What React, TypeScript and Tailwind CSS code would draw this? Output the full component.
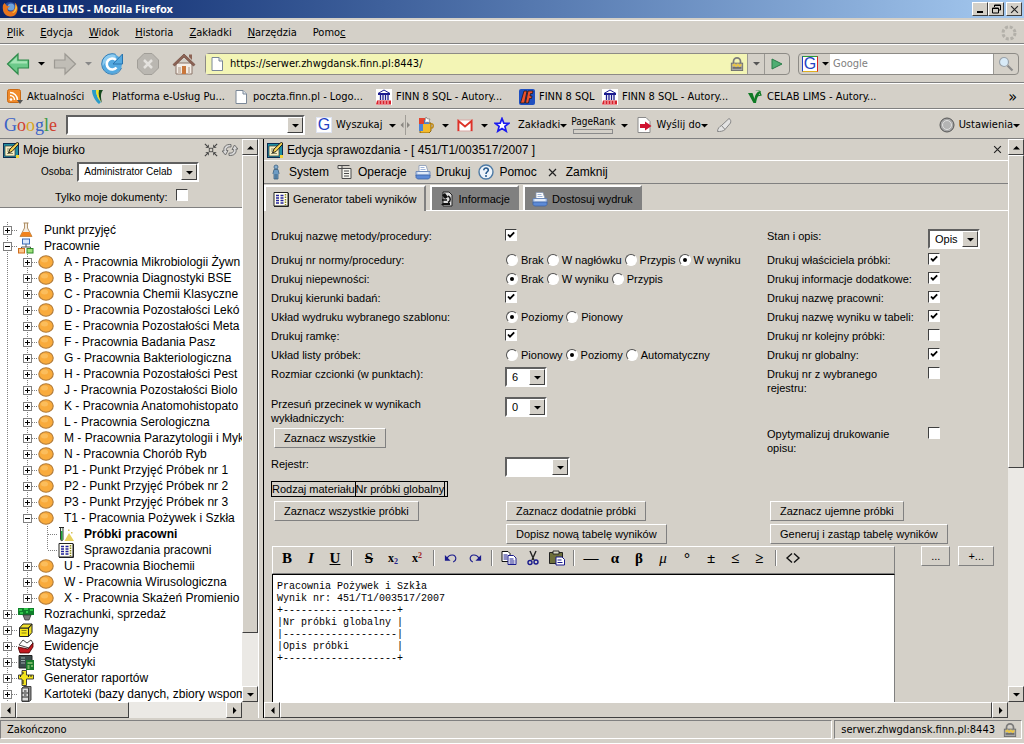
import { useState, type ReactNode } from "react";

const BEVEL = "border border-t-white border-l-white border-r-[#404040] border-b-[#404040]";
const SOFT_BEVEL = "border border-t-white border-l-white border-r-[#808080] border-b-[#808080]";
const SUNKEN = "border-2 border-t-[#606060] border-l-[#606060] border-r-white border-b-white";

/* ---------- small drawings ---------- */

type Dir = "up" | "down" | "left" | "right";

const ARROWS: Record<Dir, string> = {
  up: "M0 5.5h7L3.5 2z",
  down: "M0 2h7L3.5 5.5z",
  left: "M5.5 0v7L2 3.5z",
  right: "M2 0v7l3.5-3.5z",
};

function Arrow({ dir = "down", color = "#000" }: { dir?: Dir; color?: string }) {
  return (
    <svg width="7" height="7" viewBox="0 0 7 7" className="shrink-0" aria-hidden="true">
      <path d={ARROWS[dir]} fill={color} />
    </svg>
  );
}

function Icon({ size = 16, children }: { size?: number; children: ReactNode }) {
  return (
    <svg width={size} height={size} viewBox="0 0 16 16" className="shrink-0" aria-hidden="true">
      {children}
    </svg>
  );
}

const FirefoxIcon = () => (
  <Icon>
    <circle cx="8" cy="8" r="7" fill="#2b4c9b" />
    <circle cx="9" cy="6" r="3.500" fill="#6fa3dd" />
    <path d="M1 4C0 9 2 15 8 15.500s8-5 7.500-9C15 4 14 2 12.500 1.500c1 2 1 3 .7 4.500-.5 3-3 5-5.500 4.500-2-.5-2.500-2-2-3.500L8 5.500 5 5 2.500 2z" fill="#e8741c" />
    <path d="M13 3c1 3 0 7-3 9 2.500 0 5-2 5-6z" fill="#f8c13a" />
  </Icon>
);

const PageIcon = () => (
  <Icon>
    <path d="M3 1.500h7l3.500 3.500v9.500H3z" fill="#fff" stroke="#7a8797" />
    <path d="M10 1.500V5h3.500" fill="#dfe6ee" stroke="#7a8797" />
  </Icon>
);

const RssIcon = () => (
  <Icon>
    <rect x="0.500" y="0.500" width="13" height="13" rx="2" fill="#f08a2c" stroke="#c96a15" />
    <circle cx="4" cy="10.500" r="1.300" fill="#fff" />
    <path d="M3 6.500a4.500 4.500 0 0 1 4.500 4.500M3 3.500A7.500 7.500 0 0 1 10.500 11" fill="none" stroke="#fff" strokeWidth="1.500" />
    <path d="M10 11h6l-3 4z" fill="#555" />
  </Icon>
);

const PlatformIcon = () => (
  <Icon>
    <path d="M0 1h4c0 5 2 9 5 12l-2 2C3 12 0 6 0 1z" fill="#2a9bc9" />
    <path d="M4 1h3c-1 4 0 8 2 12C6 10 4 6 4 1z" fill="#f1e31e" />
    <path d="M7 1h4c-3 4-2 8-1 13-3-4-4-9-3-13z" fill="#174a1f" />
  </Icon>
);

const TempleIcon = () => (
  <Icon>
    <rect width="16" height="16" fill="#fff" />
    <path d="M2 4.500 8 1l6 3.500zM2 5.500h12" fill="#fff" stroke="#1b1b8f" />
    <path d="M4.500 6v5M7 6v5M9.500 6v5M12 6v5" stroke="#1b1b8f" strokeWidth="1.300" />
    <path d="M1 11.500h14v4H0z" fill="#d8202a" />
    <path d="M3 12v3M6 12v3M9 12v3M12 12v3" stroke="#fff" strokeWidth="0.800" />
  </Icon>
);

const FinnIcon = () => (
  <Icon>
    <rect width="16" height="16" rx="2" fill="#1f4fc0" />
    <path d="M5 2h3L5.500 14h-4z" fill="#f0502a" stroke="#111" strokeWidth="0.700" />
    <path d="M9 2h5l-.5 2.500h-2L11 7h2l-.5 2.500h-2L9.500 14H6.500z" fill="#f0502a" stroke="#111" strokeWidth="0.700" />
  </Icon>
);

const CelabIcon = () => (
  <Icon>
    <path d="M1 4h4.500l2 6C8 6 9.500 3 13 2c-1.500-1-3-1-4.500 0C9.500.5 13 .5 14 3c-2 2-4 5-5 11H6.500z" fill="#0f7a24" />
    <path d="M10 7l4-1-1-2.500" fill="none" stroke="#0f7a24" strokeWidth="1.200" />
  </Icon>
);

const GIcon = ({ framed = false }: { framed?: boolean }) => (
  <span
    className={`flex size-4 shrink-0 items-center justify-center border bg-white font-['Liberation_Sans'] text-base leading-none text-[#2342c4] ${
      framed ? "border-t-[#2d9a3a] border-l-[#2342c4] border-r-[#d22] border-b-[#e0b020]" : "border-[#dfe4f2]"
    }`}
  >
    G
  </span>
);

const LockIcon = () => (
  <Icon size={14}>
    <path d="M4 8V5a4 4 0 0 1 8 0v3" fill="none" stroke="#7b7b7b" strokeWidth="2" />
    <rect x="1.500" y="7" width="13" height="8.500" fill="#a8a8a8" stroke="#6c6c6c" />
    <path d="M3 10l2-1.500 2 2 2-2 2 2 2-2" fill="none" stroke="#eac646" strokeWidth="2" />
    <path d="M3 12.500h10" stroke="#333" />
  </Icon>
);

const NoteIcon = () => (
  <Icon>
    <rect x="0.500" y="1.500" width="15" height="14" fill="#1f8ea1" stroke="#0c2b52" />
    <path d="M2 4h10v10H2z" fill="#f7f0c4" stroke="#333" strokeWidth="0.700" />
    <path d="M4 7h3M4 9h3M4 11.500h6" stroke="#8a8a6a" />
    <path d="M14.500 0 7 7l-1.500 4L9 9.500 15.800 2z" fill="#f6d251" stroke="#111" strokeWidth="0.900" />
    <path d="M13 13h3v3h-3z" fill="#f1d43a" />
  </Icon>
);

const ListIcon = () => (
  <Icon>
    <path d="M1 1.500h14V15H1z" fill="#fffef0" stroke="#222" />
    <path d="M3 4.500h3M7.500 4.500h3M3 7h3M7.500 7h3M3 9.500h3M7.500 9.500h3M3 12h3M7.500 12h3" stroke="#23239b" strokeWidth="1.300" />
    <path d="M12.500 3v11" stroke="#8c8a17" strokeWidth="1.500" strokeDasharray="1.500 1" />
    <path d="M1 15.500h14.500V2" fill="none" stroke="#222" />
  </Icon>
);

const PrinterIcon = () => (
  <Icon>
    <path d="M4 1.500h7l2 6H4z" fill="#fff" stroke="#8798b4" strokeWidth="0.800" />
    <path d="M5.500 3.500h4M5.500 5.500h5" stroke="#9fb4d8" />
    <path d="M1 7.500h14v4.500H1z" fill="#c3d5f0" stroke="#5b7cb5" strokeWidth="0.800" />
    <path d="M1 11h14v2.500l-1.500 1.500h-11L1 13.500z" fill="#5d8ad6" stroke="#3c62a5" strokeWidth="0.800" />
    <path d="M3 9h10" stroke="#fff" />
  </Icon>
);

const PersonIcon = () => (
  <Icon>
    <circle cx="8" cy="3" r="2" fill="#86aed0" stroke="#3a607f" strokeWidth="0.800" />
    <path d="M6 5.500h4l1 4-1 1v4.500H6v-4.500l-1-1z" fill="#6d9cc4" stroke="#3a607f" strokeWidth="0.800" />
    <path d="M8 10v5" stroke="#3a607f" />
  </Icon>
);

const ScriptIcon = () => (
  <Icon>
    <path d="M1 1.500h11.500M1 1.500v3h4M5 2v12.500h9V4.500H5" fill="#f4f4ee" stroke="#4a4a4a" />
    <path d="M7 7h5M7 9.500h5M7 12h5" stroke="#4a4a4a" />
  </Icon>
);

const HelpIcon = () => (
  <Icon>
    <circle cx="8" cy="8" r="7" fill="#eef4fa" stroke="#4d7aa5" strokeWidth="1.400" />
    <path d="M5.800 6.300C5.800 3 10.500 3.400 10.300 6.200 10.200 7.800 8 7.800 8 10" fill="none" stroke="#24588c" strokeWidth="1.600" />
    <circle cx="8" cy="12" r="1" fill="#24588c" />
  </Icon>
);

const CloseIcon = () => (
  <Icon size={9}>
    <path d="M2 2l12 12M14 2L2 14" stroke="#222" strokeWidth="2" />
  </Icon>
);

const CrossIcon = () => (
  <Icon>
    <path d="M4 5l7 7M11 5l-7 7" stroke="#222" strokeWidth="1.200" />
  </Icon>
);

const MicroscopeIcon = () => (
  <Icon>
    <path d="M4 1h6l3 3v11H4z" fill="#ddd" stroke="#222" />
    <path d="M3 4l3-2 3 4-3 2z" fill="#111" />
    <path d="M9 5c3 1.500 3 5 0 6.500M3 9h5" fill="none" stroke="#111" strokeWidth="1.500" />
    <path d="M4 12h7v2H2z" fill="#111" />
  </Icon>
);

const FlaskIcon = () => (
  <Icon>
    <path d="M6.500 1v5L2 14.500h12L9.500 6V1" fill="#f4ece0" stroke="#a8875a" strokeWidth="0.900" />
    <path d="M4.500 10h7l2.500 4.500H2z" fill="#f0821e" />
    <path d="M5.500 1h5" stroke="#a8875a" />
  </Icon>
);

const OrgIcon = () => (
  <Icon>
    <path d="M8 6v3M3.500 11V9h9v2" fill="none" stroke="#555" />
    <rect x="4.500" y="1" width="7" height="5" fill="#dbe8fb" stroke="#3b6bb8" />
    <rect x="0.500" y="10.500" width="6" height="4.500" fill="#fbc58a" stroke="#cf6b1c" />
    <rect x="9" y="10.500" width="6" height="4.500" fill="#9fe07d" stroke="#2d8a28" />
  </Icon>
);

const BallIcon = () => (
  <Icon>
    <ellipse cx="8" cy="8" rx="7.200" ry="6.200" fill="#f9ab3c" stroke="#b07a3a" strokeWidth="1.100" />
    <ellipse cx="6.500" cy="6" rx="3.500" ry="2.500" fill="#fbbd5c" />
  </Icon>
);

const TubeIcon = () => (
  <Icon>
    <path d="M1 1.500h5" stroke="#222" />
    <path d="M2.500 2v11.500c0 1.500 2.500 1.500 2.500 0V2" fill="#dff5e0" stroke="#222" strokeWidth="0.900" />
    <path d="M3 5h1.500v9H3z" fill="#1ea33a" />
    <path d="M11 7l-4.500 8h9.500z" fill="#e6d05b" />
    <path d="M10 3.500h1.500v1.500H10zM13 6h1.500v1.500H13z" fill="#d7c35c" />
  </Icon>
);

const MoneyIcon = () => (
  <Icon>
    <path d="M0 2h16v7H0z" fill="#0f7f2a" />
    <path d="M1 4h3M6 3h4M12 4h3M2 7h3M8 6h2" stroke="#3fdd57" strokeWidth="1.500" />
    <path d="M5 9h8l-2 5H7z" fill="#7d7d7d" stroke="#333" strokeWidth="0.800" />
  </Icon>
);

const BoxIcon = () => (
  <Icon>
    <path d="M1.500 6h9v8.500h-9z" fill="#f6e61c" stroke="#222" />
    <path d="M1.500 6 5 2h9l-3.500 4zM14 2v8.500l-3.500 4V6z" fill="#f0e02a" stroke="#222" />
    <path d="M3.500 8.500h5M3.500 11h5" stroke="#8a8216" />
  </Icon>
);

const BasketIcon = () => (
  <Icon>
    <path d="M1 7 5 2l4 3 4-3 2 3-4 5z" fill="#fff" stroke="#333" strokeWidth="0.900" />
    <path d="M0 9l10 2 5-6v4l-4 6H2z" fill="#c21920" stroke="#400" strokeWidth="0.800" />
  </Icon>
);

const StatsIcon = () => (
  <Icon>
    <path d="M1 1.500h13V14H1z" fill="#3b4a4b" stroke="#222" />
    <path d="M3 4h4M3 6.500h4M3 9h4" stroke="#9fb0b0" />
    <path d="M8 6h8v10H8z" fill="#187a2b" />
    <path d="M9.500 9h5M9.500 12h2M13 12h2M9.500 14h2" stroke="#d6ef9f" strokeWidth="1.200" />
  </Icon>
);

const RulerIcon = () => (
  <Icon>
    <path d="M4 .500h4.500V5h7v4h-7v6.500H4V9H.500V5H4z" fill="#f4e41e" stroke="#333" strokeWidth="0.900" />
    <path d="M2.500 5v2M10.500 5v2M13 5v2M4 3h2M4 11h2M4 13h2" stroke="#222" />
  </Icon>
);

const CabinetIcon = () => (
  <Icon>
    <path d="M4 2l2-1.500h7V14l-2 1.500H4z" fill="#8a8a8a" stroke="#333" strokeWidth="0.900" />
    <path d="M4 2h6.500v13H4z" fill="#dedede" stroke="#333" strokeWidth="0.900" />
    <path d="M6 5h2.500M6 9h2.500M4 7h6M4 11h6" stroke="#222" />
  </Icon>
);

/* ---------- scroll bars ---------- */

function ScrollButton({ dir }: { dir: Dir }) {
  return (
    <button aria-label={`scroll ${dir}`} className={`flex size-4 shrink-0 items-center justify-center bg-[#d4d0c8] ${BEVEL}`}>
      <Arrow dir={dir} />
    </button>
  );
}

function VScroll({ thumb }: { thumb: string }) {
  return (
    <div className="flex w-4 shrink-0 flex-col bg-[#ebe9e5]">
      <ScrollButton dir="up" />
      <div className="min-h-0 flex-1">
        <div className={`bg-[#d4d0c8] ${BEVEL} ${thumb}`} />
      </div>
      <ScrollButton dir="down" />
    </div>
  );
}

function HScroll({ thumb }: { thumb: string }) {
  return (
    <div className="flex h-4 shrink-0 bg-[#d4d0c8]">
      <div className="flex min-w-0 flex-1 bg-[#ebe9e5]">
        <ScrollButton dir="left" />
        <div className="min-w-0 flex-1">
          <div className={`h-4 bg-[#d4d0c8] ${BEVEL} ${thumb}`} />
        </div>
        <ScrollButton dir="right" />
      </div>
      <div className="w-4" />
    </div>
  );
}

/* ---------- form controls ---------- */

function Check({ id, checked = false }: { id: string; checked?: boolean }) {
  const [on, setOn] = useState(checked);
  return (
    <span className="relative inline-flex size-3 shrink-0">
      <input
        id={id}
        type="checkbox"
        checked={on}
        onChange={(e) => setOn(e.target.checked)}
        className="size-3 appearance-none border border-t-[#404040] border-r-white border-b-white border-l-[#404040] bg-white"
      />
      {on && (
        <svg viewBox="0 0 12 12" className="pointer-events-none absolute inset-0 size-3">
          <path d="M3 5.500 5 7.700 9.200 3.300" fill="none" stroke="#000" strokeWidth="1.800" />
        </svg>
      )}
    </span>
  );
}

function RadioRow({ name, options, value }: { name: string; options: string[]; value: string }) {
  const [current, setCurrent] = useState(value);
  return (
    <div className="flex h-[19px] items-center gap-[3px] pl-px" role="radiogroup" aria-label={name}>
      {options.map((o) => (
        <label key={o} className="flex items-center gap-[3px] whitespace-nowrap">
          <span className="relative inline-flex size-3">
            <input
              type="radio"
              name={name}
              checked={current === o}
              onChange={() => setCurrent(o)}
              className="size-3 appearance-none rounded-full border border-t-[#505050] border-r-white border-b-white border-l-[#505050] bg-white"
            />
            {current === o && <span className="pointer-events-none absolute inset-1 rounded-full bg-black" />}
          </span>
          {o}
        </label>
      ))}
    </div>
  );
}

function Select({ id, value, size }: { id: string; value: string; size: string }) {
  return (
    <span className={`relative inline-flex h-5 ${size}`}>
      <select id={id} defaultValue={value} className={`h-5 w-full appearance-none bg-white pl-[5px] leading-4 ${SUNKEN}`}>
        <option value={value}>{value}</option>
      </select>
      <span className={`pointer-events-none absolute inset-y-0.5 right-0.5 flex w-4 items-center justify-center bg-[#d4d0c8] ${BEVEL}`}>
        <Arrow />
      </span>
    </span>
  );
}

function FormButton({ children }: { children: ReactNode }) {
  return (
    <button className={`h-5 bg-[#d4d0c8] px-[9px] leading-4 whitespace-nowrap ${SOFT_BEVEL}`}>{children}</button>
  );
}

/* ---------- browser chrome ---------- */

const MENU = [
  { key: "P", rest: "lik" },
  { key: "E", rest: "dycja" },
  { key: "W", rest: "idok" },
  { key: "H", rest: "istoria" },
  { key: "Z", rest: "akładki" },
  { key: "N", rest: "arzędzia" },
];

const BOOKMARKS = [
  { icon: <RssIcon />, title: "Aktualności", width: "w-[85px]" },
  { icon: <PlatformIcon />, title: "Platforma e-Usług Pu...", width: "w-[141px]" },
  { icon: <PageIcon />, title: "poczta.finn.pl - Logo...", width: "w-[143px]" },
  { icon: <TempleIcon />, title: "FINN 8 SQL - Autory...", width: "w-[143px]" },
  { icon: <FinnIcon />, title: "FINN 8 SQL", width: "w-[83px]" },
  { icon: <TempleIcon />, title: "FINN 8 SQL - Autory...", width: "w-[145px]" },
  { icon: <CelabIcon />, title: "CELAB LIMS - Autory...", width: "w-[145px]" },
];

function TitleBar() {
  return (
    <header className="flex h-[18px] shrink-0 items-center bg-linear-to-r from-[#0a246a] to-[#a6caf0] pr-0.5 pl-0.5 text-white">
      <FirefoxIcon />
      <h1 className="ml-0.5 flex-1 font-['Noto_Sans'] text-[11px] leading-4 font-bold">CELAB LIMS - Mozilla Firefox</h1>
      <button aria-label="Minimalizuj" className={`flex h-3.5 w-4 items-end justify-center bg-[#d4d0c8] pb-0.5 ${BEVEL}`}>
        <span className="h-0.5 w-1.5 bg-black" />
      </button>
      <button aria-label="Przywróć" className={`flex h-3.5 w-4 items-center justify-center bg-[#d4d0c8] ${BEVEL}`}>
        <svg width="9" height="10" viewBox="0 0 9 10">
          <path d="M2.500 3V1h6v5H6.500M.500 4h6v5h-6z" fill="none" stroke="#000" />
          <path d="M2 1.500h7M0 4.500h7" stroke="#000" />
        </svg>
      </button>
      <button aria-label="Zamknij okno" className={`ml-0.5 flex h-3.5 w-4 items-center justify-center bg-[#d4d0c8] ${BEVEL}`}>
        <CloseIcon />
      </button>
    </header>
  );
}

function MenuBar() {
  return (
    <nav className="mt-0.5 flex h-6 shrink-0 items-center gap-4 border-t border-b border-t-white border-b-[#808080] px-[7px] pt-0.5">
      {MENU.map((m) => (
        <a key={m.key} href="#">
          <u>{m.key}</u>
          {m.rest}
        </a>
      ))}
      <a href="#">
        Pomo<u>c</u>
      </a>
      <svg width="16" height="16" viewBox="0 0 16 16" className="ml-auto" aria-hidden="true">
        <circle cx="8" cy="8" r="6" fill="none" stroke="#b3b0a9" strokeWidth="3" strokeDasharray="3 1.710" />
      </svg>
    </nav>
  );
}

function NavBar() {
  return (
    <div className="flex h-[39px] shrink-0 items-center border-t border-b border-t-white border-b-[#808080] pr-[5px] pl-1.5">
      <button aria-label="Wstecz">
        <svg width="24" height="24" viewBox="0 0 24 24">
          <path d="M1.500 12 12 2v6h10.500v8H12v6z" fill="#6cc98a" stroke="#2f8a4b" strokeWidth="1.200" />
          <path d="M4 11.500 10.800 5v4.200H21v2.300z" fill="#a5e4b5" />
        </svg>
      </button>
      <span className="flex w-[23px] justify-center"><Arrow /></span>
      <button aria-label="Do przodu">
        <svg width="24" height="24" viewBox="0 0 24 24">
          <path d="M22.500 12 12 2v6H1.500v8H12v6z" fill="#c0bdb6" stroke="#9c9993" strokeWidth="1.200" />
        </svg>
      </button>
      <span className="flex w-[23px] justify-center"><Arrow color="#888" /></span>
      <button aria-label="Odśwież">
        <svg width="24" height="24" viewBox="0 0 24 24">
          <circle cx="12" cy="12" r="10" fill="#54a9e0" />
          <path d="M12 2a10 10 0 0 0-10 10c0 1 .2 2 .5 3C6 8 10 6 16 6l-1-3.500z" fill="#8dcbf0" />
          <path d="M16.500 15.500a5.500 5.500 0 1 1-.5-7.500" fill="none" stroke="#fff" strokeWidth="2.600" />
          <path d="M22.500 2v10H13z" fill="#54a9e0" stroke="#2a74ae" />
          <circle cx="12" cy="12" r="10.300" fill="none" stroke="#2f7fbb" strokeDasharray="48 17" strokeDashoffset="-4" />
        </svg>
      </button>
      <button aria-label="Zatrzymaj" className="ml-3">
        <svg width="24" height="24" viewBox="0 0 24 24">
          <path d="M8 1.500h8L22.500 8v8L16 22.500H8L1.500 16V8z" fill="#bab7b1" stroke="#a19e98" />
          <path d="M8 8l8 8M16 8l-8 8" stroke="#e4e2de" strokeWidth="2.500" />
        </svg>
      </button>
      <button aria-label="Strona startowa" className="ml-3">
        <svg width="24" height="24" viewBox="0 0 24 24">
          <path d="M4 11h16v11H4z" fill="#f3ede6" stroke="#8b7468" />
          <path d="M1 12.500 12 2l11 10.500-1.500 1.500L12 5 2.500 14z" fill="#8d6355" stroke="#6b463a" strokeWidth="0.700" />
          <path d="M17 2.500h3V8l-3-3z" fill="#8d6355" />
          <path d="M10 14h4v8h-4z" fill="#c9773b" />
          <path d="M6 15h3v7H6zM16 15h2v7h-2z" fill="#cfc1b5" />
        </svg>
      </button>
      <form className="ml-[9px] flex h-[22px] min-w-0 flex-1 rounded-sm border border-[#8d8b86]" onSubmit={(e) => e.preventDefault()}>
        <div className="flex min-w-0 flex-1 items-center bg-[#f3f5b5] px-[3px]">
          <PageIcon />
          <input aria-label="Adres" defaultValue="https://serwer.zhwgdansk.finn.pl:8443/" className="ml-[5px] min-w-0 flex-1 bg-transparent outline-none" />
          <LockIcon />
        </div>
        <button aria-label="Historia adresów" className="flex w-[17px] items-center justify-center border-l border-[#9a9893]">
          <Arrow color="#555" />
        </button>
        <button aria-label="Przejdź" className="flex w-[25px] items-center justify-center border-l border-[#9a9893]">
          <svg width="12" height="12" viewBox="0 0 12 12">
            <path d="M1 1v10l10-5z" fill="#4fae72" stroke="#2a7d49" />
          </svg>
        </button>
      </form>
      <form className="ml-2 flex h-[22px] w-[221px] rounded-sm border border-[#8d8b86]" onSubmit={(e) => e.preventDefault()}>
        <span className="flex w-[31px] items-center gap-1 pl-[3px]">
          <GIcon framed />
          <Arrow />
        </span>
        <input aria-label="Szukaj" placeholder="Google" className="min-w-0 flex-1 bg-white pl-[3px] outline-none placeholder:text-[#808080]" />
        <button aria-label="Szukaj w Google" className="flex w-[25px] items-center justify-center border-l border-[#9a9893]">
          <Icon>
            <path d="M9.500 9.500l5 5" stroke="#8c8c8c" strokeWidth="2.200" />
            <circle cx="6" cy="6" r="4.500" fill="#d8eaf7" stroke="#9ba3aa" strokeWidth="1.200" />
          </Icon>
        </button>
      </form>
    </div>
  );
}

function BookmarkBar() {
  return (
    <nav className="flex h-[26px] shrink-0 items-center border-t border-b border-t-white border-b-[#808080] px-[7px] pt-0.5">
      {BOOKMARKS.map((b, i) => (
        <a key={i} href="#" className={`flex shrink-0 items-center gap-1 whitespace-nowrap ${b.width}`}>
          {b.icon}
          {b.title}
        </a>
      ))}
      <button aria-label="Więcej zakładek" className="ml-auto text-base leading-4">»</button>
    </nav>
  );
}

function GoogleBar() {
  return (
    <div className="flex h-[30px] shrink-0 items-center border-t border-b border-t-white border-b-[#808080] px-1 pt-0.5">
      <a href="#" className="w-[62px] font-['Liberation_Serif'] text-lg leading-5">
        <span className="text-[#3b62c6]">G</span>
        <span className="text-[#d1402f]">o</span>
        <span className="text-[#d9a51c]">o</span>
        <span className="text-[#3b62c6]">g</span>
        <span className="text-[#3f9a45]">l</span>
        <span className="text-[#d1402f]">e</span>
      </a>
      <span className="relative flex h-5 w-[239px]">
        <input aria-label="Wyszukiwanie Google" className={`h-5 w-full bg-white px-1 outline-none ${SUNKEN}`} />
        <span className={`pointer-events-none absolute inset-y-0.5 right-0.5 flex w-4 items-center justify-center bg-[#d4d0c8] ${BEVEL}`}>
          <Arrow />
        </span>
      </span>
      <button className="ml-[11px] flex w-[80px] items-center gap-1 whitespace-nowrap">
        <GIcon />
        Wyszukaj
        <span className="ml-auto flex"><Arrow /></span>
      </button>
      <svg width="10" height="20" viewBox="0 0 10 20" className="ml-1 shrink-0" aria-hidden="true">
        <path d="M5.500 0v20" stroke="#a09d97" />
        <path d="M3.500 7v6l-3-3zM7 7v6l3-3z" fill="#8a8781" />
      </svg>
      <button aria-label="Gadżety" className="ml-2 flex items-center gap-2">
        <Icon>
          <path d="M2 6h11v8l-2 2H2z" fill="#f2b92c" stroke="#7a5200" strokeWidth="0.800" />
          <rect x="1" y="1" width="6" height="6" fill="#e2432f" />
          <rect x="6" y="3" width="5" height="4" fill="#4a84d8" />
          <path d="M8 0l1.500 2L12 2l-1 2 1 2-3-1-2 1V4z" fill="#fff" stroke="#555" strokeWidth="0.500" />
          <path d="M13 7c3-1 3 4 0 4" fill="none" stroke="#c08a1a" strokeWidth="1.500" />
          <path d="M1 7h4v7H1z" fill="#4a84d8" />
        </Icon>
        <Arrow />
      </button>
      <button aria-label="Gmail" className="ml-2 flex items-center gap-2">
        <Icon>
          <rect x="0.500" y="3" width="15" height="11" fill="#fff" stroke="#d9a7a3" />
          <path d="M1.500 14V4l6.500 5.500L14.500 4v10" fill="none" stroke="#dd3329" strokeWidth="1.800" />
        </Icon>
        <Arrow />
      </button>
      <button className="ml-1.5 flex items-center gap-2 whitespace-nowrap">
        <Icon>
          <path d="M8 1.500l1.800 4.600 5 .2-3.900 3.100 1.300 4.800L8 11.500l-4.200 2.700 1.300-4.800L1.200 6.300l5-.2z" fill="#fff" stroke="#1a1af0" strokeWidth="1.700" />
        </Icon>
        <span className="flex items-center">
          Zakładki
          <Arrow />
        </span>
      </button>
      <button className="ml-1 flex items-center gap-1.5">
        <span className="flex flex-col items-center text-[10px] leading-[10px]">
          PageRank
          <span className="mt-0.5 h-[5px] w-10 border border-[#8a8a8a]" />
        </span>
        <Arrow />
      </button>
      <button className="ml-2 flex items-center gap-1 whitespace-nowrap">
        <Icon>
          <path d="M2 .500h8l4 4v11H2z" fill="#fff" stroke="#8a8a8a" />
          <path d="M4 7h5V4.500L15.500 9 9 13.500V11H4z" fill="#cf1330" />
        </Icon>
        <span className="flex items-center">
          Wyślij do
          <Arrow />
        </span>
      </button>
      <button aria-label="Podświetl" className="ml-2">
        <Icon>
          <path d="M1.500 14.500c0-3 2-5 4-6L13 1.500c2 1 2 3 1.500 4.500L9 12.500c-2 2-5 2-7.500 2z" fill="#e3e3e3" stroke="#868686" />
          <path d="M5.500 8.500 9 12.500" stroke="#868686" />
        </Icon>
      </button>
      <button className="ml-auto flex items-center gap-1 whitespace-nowrap">
        <Icon>
          <circle cx="8" cy="8" r="7" fill="#a6a6a6" stroke="#555" />
          <circle cx="8" cy="8" r="4.500" fill="#b4b4b4" stroke="#e0e0e0" />
        </Icon>
        <span className="flex items-center">
          Ustawienia
          <Arrow />
        </span>
      </button>
    </div>
  );
}

/* ---------- desktop tree ---------- */

type Node = { level: number; label: string; icon: ReactNode; open?: boolean; leaf?: boolean; bold?: boolean; last?: boolean };

const lab = (label: string): Node => ({ level: 1, label, icon: <BallIcon /> });

const TREE: Node[] = [
  { level: 0, label: "Punkt przyjęć", icon: <FlaskIcon /> },
  { level: 0, label: "Pracownie", icon: <OrgIcon />, open: true },
  lab("A - Pracownia Mikrobiologii Żywn"),
  lab("B - Pracownia Diagnostyki BSE"),
  lab("C - Pracownia Chemii Klasyczne"),
  lab("D - Pracownia Pozostałości Lekó"),
  lab("E - Pracownia Pozostałości Meta"),
  lab("F - Pracownia Badania Pasz"),
  lab("G - Pracownia Bakteriologiczna"),
  lab("H - Pracownia Pozostałości Pest"),
  lab("J - Pracownia Pozostałości Biolo"),
  lab("K - Pracownia Anatomohistopato"),
  lab("L - Pracownia Serologiczna"),
  lab("M - Pracownia Parazytologii i Myk"),
  lab("N - Pracownia Chorób Ryb"),
  lab("P1 - Punkt Przyjęć Próbek nr 1"),
  lab("P2 - Punkt Przyjęć Próbek nr 2"),
  lab("P3 - Punkt Przyjęć Próbek nr 3"),
  { ...lab("T1 - Pracownia Pożywek i Szkła"), open: true },
  { level: 2, label: "Próbki pracowni", icon: <TubeIcon />, leaf: true, bold: true },
  { level: 2, label: "Sprawozdania pracowni", icon: <ListIcon />, leaf: true, last: true },
  lab("U - Pracownia Biochemii"),
  lab("W - Pracownia Wirusologiczna"),
  { ...lab("X - Pracownia Skażeń Promienio"), last: true },
  { level: 0, label: "Rozrachunki, sprzedaż", icon: <MoneyIcon /> },
  { level: 0, label: "Magazyny", icon: <BoxIcon /> },
  { level: 0, label: "Ewidencje", icon: <BasketIcon /> },
  { level: 0, label: "Statystyki", icon: <StatsIcon /> },
  { level: 0, label: "Generator raportów", icon: <RulerIcon /> },
  { level: 0, label: "Kartoteki (bazy danych, zbiory wspom", icon: <CabinetIcon /> },
];

function TreeToggle({ node }: { node: Node }) {
  return (
    <svg width="18" height="16" viewBox="0 0 18 16" className="shrink-0" shapeRendering="crispEdges" aria-hidden="true">
      <path d={node.last ? "M7.500 0v8" : "M7.500 0v16"} stroke="#808080" strokeDasharray="1 1" />
      <path d="M8 8.500h10" stroke="#808080" strokeDasharray="1 1" />
      {!node.leaf && (
        <>
          <rect x="3.500" y="4.500" width="8" height="8" fill="#fff" stroke="#808080" />
          <path d={node.open ? "M5 8.500h5" : "M5 8.500h5M7.500 6v5"} stroke="#000" />
        </>
      )}
    </svg>
  );
}

function TreeRow({ node }: { node: Node }) {
  return (
    <li className="flex h-4 items-center whitespace-nowrap">
      {[...Array(node.level)].map((_, i) => (
        <svg key={i} width="20" height="16" className="shrink-0" shapeRendering="crispEdges" aria-hidden="true">
          <path d="M7.500 0v16" stroke="#808080" strokeDasharray="1 1" />
        </svg>
      ))}
      <TreeToggle node={node} />
      {node.icon}
      <a href="#" className={`ml-2.5 ${node.bold ? "font-bold" : ""}`}>
        {node.label}
      </a>
    </li>
  );
}

function Sidebar() {
  return (
    <aside className="flex w-[258px] shrink-0 flex-col font-['Liberation_Sans',sans-serif] text-xs leading-4">
      <div className="flex min-h-0 flex-1">
        <div className="flex min-w-0 flex-1 flex-col overflow-hidden bg-white">
          <div className="h-[69px] shrink-0 border-b border-[#808080] bg-[#d4d0c8]">
            <div className="flex h-[22px] items-center gap-1 pl-[3px]">
              <NoteIcon />
              <h2 className="flex-1">Moje biurko</h2>
              <button aria-label="Zwiń">
                <Icon size={14}>
                  <path d="M1 1l4 4M15 1l-4 4M1 15l4-4M15 15l-4-4" stroke="#444" strokeWidth="1.300" />
                  <path d="M5 2v3H2M11 2v3h3M5 14v-3H2M11 14v-3h3" fill="none" stroke="#444" />
                  <rect x="6" y="6" width="4" height="4" fill="none" stroke="#444" />
                </Icon>
              </button>
              <button aria-label="Odśwież drzewo" className="mr-1">
                <Icon>
                  <path d="M9 2.500C4 2 1 5 2 9L0 9l3.500 4L6 8.500H4.500C4 6 6 4.500 9 5z" fill="#d8d8d8" stroke="#666" strokeWidth="0.900" />
                  <path d="M7 13.500c5 .5 8-2.500 7-6.500h2l-3.500-4L10 7.500h1.500C12 10 10 11.500 7 11z" fill="#d8d8d8" stroke="#666" strokeWidth="0.900" />
                </Icon>
              </button>
            </div>
            <div className="flex h-[22px] items-center gap-1 pl-[41px] text-[10px]">
              <label htmlFor="osoba">Osoba:</label>
              <Select id="osoba" value="Administrator Celab" size="w-[122px] text-[10px]" />
            </div>
            <div className="flex h-6 items-end gap-2 pl-[55px] text-[11px]">
              <label htmlFor="moje" className="mb-1 leading-3">Tylko moje dokumenty:</label>
              <span className="mb-1.5 flex"><Check id="moje" /></span>
            </div>
          </div>
          <ul className="pt-3.5">
            {TREE.map((n) => (
              <TreeRow key={n.label} node={n} />
            ))}
          </ul>
        </div>
        <VScroll thumb="h-[90%]" />
      </div>
      <HScroll thumb="w-[54%]" />
    </aside>
  );
}

/* ---------- report editor ---------- */

const TABS = [
  { label: "Generator tabeli wyników", icon: <ListIcon />, active: true },
  { label: "Informacje", icon: <MicroscopeIcon />, active: false },
  { label: "Dostosuj wydruk", icon: <PrinterIcon />, active: false },
];

const ACTIONS = [
  { label: "System", icon: <PersonIcon /> },
  { label: "Operacje", icon: <ScriptIcon /> },
  { label: "Drukuj", icon: <PrinterIcon /> },
  { label: "Pomoc", icon: <HelpIcon /> },
  { label: "Zamknij", icon: <CrossIcon /> },
];

const REPORT = `Pracownia Pożywek i Szkła
Wynik nr: 451/T1/003517/2007
+-------------------+
|Nr próbki globalny |
|-------------------|
|Opis próbki        |
+-------------------+`;

function FormRow({
  height = "h-[19px]",
  label,
  htmlFor,
  children,
  rightLabel,
  rightFor,
  right,
}: {
  height?: string;
  label?: ReactNode;
  htmlFor?: string;
  children?: ReactNode;
  rightLabel?: string;
  rightFor?: string;
  right?: ReactNode;
}) {
  return (
    <div className={`grid grid-cols-[234px_262px_161px_1fr] items-start ${height}`}>
      {typeof label === "string" ? (
        <label htmlFor={htmlFor} className="max-w-[190px] pt-[3px]">{label}</label>
      ) : (
        <div>{label}</div>
      )}
      <div className="flex">{children}</div>
      <label htmlFor={rightFor} className="max-w-[150px] pt-[3px]">{rightLabel}</label>
      <div className="flex">{right}</div>
    </div>
  );
}

function CheckCell({ id, checked }: { id: string; checked?: boolean }) {
  return (
    <span className="flex h-[18px] items-center">
      <Check id={id} checked={checked} />
    </span>
  );
}

function Tool({ title, children }: { title: string; children: ReactNode }) {
  return (
    <button aria-label={title} className="flex size-6 shrink-0 items-center justify-center">
      {children}
    </button>
  );
}

const ToolGap = () => (
  <span className="flex w-2.5 shrink-0 justify-center">
    <span className="h-4 w-0.5 border-l border-r border-l-[#808080] border-r-white" />
  </span>
);

const SYMBOLS = ["—", "α", "β", "μ", "°", "±", "≤", "≥"];

function EditorToolbar() {
  return (
    <div className={`flex h-7 items-center pb-1 pl-0.5 font-['Liberation_Serif',serif] text-[15px] leading-4 font-bold ${SOFT_BEVEL}`}>
      <Tool title="Pogrubienie">B</Tool>
      <Tool title="Kursywa"><i>I</i></Tool>
      <Tool title="Podkreślenie"><u>U</u></Tool>
      <ToolGap />
      <Tool title="Przekreślenie"><s>S</s></Tool>
      <Tool title="Indeks dolny">
        <span className="text-xs">x<sub className="text-[8px] text-[#22228a]">2</sub></span>
      </Tool>
      <Tool title="Indeks górny">
        <span className="text-xs">x<sup className="text-[8px] text-[#a02222]">2</sup></span>
      </Tool>
      <ToolGap />
      <Tool title="Cofnij">
        <Icon size={14}>
          <path d="M3.500 8.500C6 3 14 3.500 13.500 9c-.2 2-1.500 3-3 3.500" fill="none" stroke="#1a1a8c" strokeWidth="1.300" />
          <path d="M1 4.500V11h6.500z" fill="#1a1a8c" />
        </Icon>
      </Tool>
      <Tool title="Ponów">
        <Icon size={14}>
          <path d="M12.500 8.500C10 3 2 3.500 2.500 9c.2 2 1.500 3 3 3.500" fill="none" stroke="#1a1a8c" strokeWidth="1.300" />
          <path d="M15 4.500V11H8.500z" fill="#1a1a8c" />
        </Icon>
      </Tool>
      <ToolGap />
      <Tool title="Kopiuj">
        <Icon>
          <path d="M1 1.500h6l2 2v8H1z" fill="#fff" stroke="#111" />
          <path d="M2.500 5h4M2.500 7h4M2.500 9h4" stroke="#1a1a8c" />
          <path d="M7 5.500h5.500l2.500 2.500v6.500H7z" fill="#fff" stroke="#1a1a8c" />
          <path d="M8.500 9h4M8.500 11h5M8.500 13h5" stroke="#1a1a8c" />
        </Icon>
      </Tool>
      <Tool title="Wytnij">
        <Icon>
          <path d="M5 1l4 9M11 1 7 10" stroke="#222" strokeWidth="1.400" />
          <circle cx="5" cy="12.500" r="2" fill="none" stroke="#1a1a8c" strokeWidth="1.400" />
          <circle cx="11" cy="12" r="2" fill="none" stroke="#1a1a8c" strokeWidth="1.400" />
        </Icon>
      </Tool>
      <Tool title="Wklej">
        <Icon>
          <path d="M.500 2.500h13v11H.500z" fill="#6d6f3c" stroke="#222" />
          <path d="M4 1h6v3H4z" fill="#d9d9c8" stroke="#222" strokeWidth="0.900" />
          <path d="M7 7h6l2.500 2.500V15H7z" fill="#fff" stroke="#1a1a8c" />
          <path d="M8.500 10h4M8.500 12.500h5" stroke="#1a1a8c" />
        </Icon>
      </Tool>
      <ToolGap />
      {SYMBOLS.map((s) => (
        <Tool key={s} title={`Wstaw ${s}`}>
          {s === "μ" ? <i className="font-normal">{s}</i> : s}
        </Tool>
      ))}
      <ToolGap />
      <Tool title="Źródło">
        <Icon>
          <path d="M7 3.500 2 8l5 4.500M9 3.500 14 8l-5 4.500" fill="none" stroke="#111" strokeWidth="1.400" />
        </Icon>
      </Tool>
    </div>
  );
}

function GeneratorForm() {
  return (
    <div className="flex min-h-0 flex-1 flex-col overflow-hidden pt-[15px] pl-[7px] text-[11px] leading-[14px]">
      <FormRow
        height="h-6"
        label="Drukuj nazwę metody/procedury:"
        htmlFor="metoda"
        rightLabel="Stan i opis:"
        rightFor="stan"
        right={<span className="mt-[3px] flex"><Select id="stan" value="Opis" size="w-[52px]" /></span>}
      >
        <CheckCell id="metoda" checked />
      </FormRow>
      <FormRow label="Drukuj nr normy/procedury:" rightLabel="Drukuj właściciela próbki:" rightFor="wlasciciel" right={<CheckCell id="wlasciciel" checked />}>
        <RadioRow name="normy" options={["Brak", "W nagłówku", "Przypis", "W wyniku"]} value="W wyniku" />
      </FormRow>
      <FormRow label="Drukuj niepewności:" rightLabel="Drukuj informacje dodatkowe:" rightFor="info" right={<CheckCell id="info" checked />}>
        <RadioRow name="niepewnosci" options={["Brak", "W wyniku", "Przypis"]} value="Brak" />
      </FormRow>
      <FormRow label="Drukuj kierunki badań:" htmlFor="kierunki" rightLabel="Drukuj nazwę pracowni:" rightFor="pracownia" right={<CheckCell id="pracownia" checked />}>
        <CheckCell id="kierunki" checked />
      </FormRow>
      <FormRow label="Układ wydruku wybranego szablonu:" rightLabel="Drukuj nazwę wyniku w tabeli:" rightFor="wynik" right={<CheckCell id="wynik" checked />}>
        <RadioRow name="szablon" options={["Poziomy", "Pionowy"]} value="Poziomy" />
      </FormRow>
      <FormRow label="Drukuj ramkę:" htmlFor="ramka" rightLabel="Drukuj nr kolejny próbki:" rightFor="kolejny" right={<CheckCell id="kolejny" />}>
        <CheckCell id="ramka" checked />
      </FormRow>
      <FormRow label="Układ listy próbek:" rightLabel="Drukuj nr globalny:" rightFor="globalny" right={<CheckCell id="globalny" checked />}>
        <RadioRow name="lista" options={["Pionowy", "Poziomy", "Automatyczny"]} value="Poziomy" />
      </FormRow>
      <FormRow
        height="h-[30px]"
        label="Rozmiar czcionki (w punktach):"
        htmlFor="rozmiar"
        rightLabel="Drukuj nr z wybranego rejestru:"
        rightFor="zrejestru"
        right={<CheckCell id="zrejestru" />}
      >
        <span className="mt-[3px] flex"><Select id="rozmiar" value="6" size="w-[42px]" /></span>
      </FormRow>
      <FormRow height="h-[30px]" label="Przesuń przecinek w wynikach wykładniczych:" htmlFor="przecinek">
        <span className="mt-[3px] flex"><Select id="przecinek" value="0" size="w-[42px]" /></span>
      </FormRow>
      <FormRow
        height="h-[30px]"
        label={<div className="pt-1 pl-[3px]"><FormButton>Zaznacz wszystkie</FormButton></div>}
        rightLabel="Opytymalizuj drukowanie opisu:"
        rightFor="opt"
        right={<CheckCell id="opt" />}
      />
      <FormRow height="h-[27px]" label="Rejestr:" htmlFor="rejestr">
        <span className="mt-[3px] flex"><Select id="rejestr" value="" size="w-[65px]" /></span>
      </FormRow>
      <table className="w-fit border-collapse border border-black">
        <thead>
          <tr>
            <th className="border border-black p-0 font-normal">Rodzaj materiału</th>
            <th className="border border-black p-0 font-normal">Nr próbki globalny</th>
            <th className="w-[3px] border border-black" />
          </tr>
        </thead>
      </table>
      <div className="mt-1 grid grid-cols-[232px_264px_1fr] gap-y-[3px] pl-[3px]">
        <div><FormButton>Zaznacz wszystkie próbki</FormButton></div>
        <div><FormButton>Zaznacz dodatnie próbki</FormButton></div>
        <div><FormButton>Zaznacz ujemne próbki</FormButton></div>
        <div />
        <div><FormButton>Dopisz nową tabelę wyników</FormButton></div>
        <div><FormButton>Generuj i zastąp tabelę wyników</FormButton></div>
      </div>
      <div className="mt-0.5 flex min-h-0 flex-1 items-start pr-3.5">
        <div className="mr-[26px] ml-px flex min-w-0 flex-1 flex-col self-stretch">
          <EditorToolbar />
          <textarea
            aria-label="Treść sprawozdania"
            defaultValue={REPORT}
            className="min-h-0 flex-1 resize-none border-t border-r border-l border-t-black border-r-[#808080] border-l-black bg-white px-1 py-1.5 font-['Liberation_Mono',monospace] text-[10px] leading-3 text-black outline-none"
          />
        </div>
        <div className="flex gap-2">
          <FormButton>...</FormButton>
          <FormButton>+...</FormButton>
        </div>
      </div>
    </div>
  );
}

function ReportWindow() {
  return (
    <main className="flex min-w-0 flex-1 flex-col border-l border-black font-['Liberation_Sans',sans-serif] text-xs leading-4">
      <div className="flex min-h-0 flex-1">
        <div className="flex min-w-0 flex-1 flex-col">
          <div className="flex h-[22px] shrink-0 items-center gap-1 border-b border-white pr-1.5 pl-[3px]">
            <NoteIcon />
            <h2 className="flex-1">Edycja sprawozdania - [ 451/T1/003517/2007 ]</h2>
            <button aria-label="Zamknij sprawozdanie"><CloseIcon /></button>
          </div>
          <nav className="flex h-[23px] shrink-0 items-center gap-2 border-b border-[#808080] pl-1">
            {ACTIONS.map((a) => (
              <button key={a.label} className="flex items-center gap-[5px]">
                {a.icon}
                {a.label}
              </button>
            ))}
          </nav>
          <div className="flex h-[27px] shrink-0 items-stretch gap-1 border-b border-white pt-px" role="tablist">
            {TABS.map((t) => (
              <button
                key={t.label}
                role="tab"
                aria-selected={t.active}
                className={`flex items-center gap-1 border-2 border-b-0 border-t-white border-l-white border-r-[#808080] px-[7px] text-[11px] ${
                  t.active ? "-mb-px bg-[#d4d0c8]" : "bg-[#808080]"
                }`}
              >
                {t.icon}
                {t.label}
              </button>
            ))}
          </div>
          <GeneratorForm />
        </div>
        <VScroll thumb="h-[59%]" />
      </div>
      <HScroll thumb="w-full" />
    </main>
  );
}

function StatusBar() {
  return (
    <footer className="flex h-[26px] shrink-0 items-stretch gap-0.5 border-b border-b-white pt-0.5 pb-1 pr-0.5">
      <span className="flex flex-1 items-center border border-t-[#808080] border-r-white border-b-white border-l-[#808080] pl-1.5">
        Zakończono
      </span>
      <span className="flex items-center gap-2 border border-t-[#808080] border-r-white border-b-white border-l-[#808080] pr-1 pl-1.5">
        serwer.zhwgdansk.finn.pl:8443
        <LockIcon />
      </span>
    </footer>
  );
}

export default function App() {
  return (
    <div className="flex h-screen flex-col overflow-hidden bg-[#d4d0c8] font-['DejaVu_Sans_Condensed','DejaVu_Sans',sans-serif] text-[11px] leading-4 text-black">
      <TitleBar />
      <MenuBar />
      <NavBar />
      <BookmarkBar />
      <GoogleBar />
      <div className="flex min-h-0 flex-1">
        <Sidebar />
        <div className="w-[5px] shrink-0 border-l border-white" />
        <ReportWindow />
      </div>
      <StatusBar />
    </div>
  );
}
